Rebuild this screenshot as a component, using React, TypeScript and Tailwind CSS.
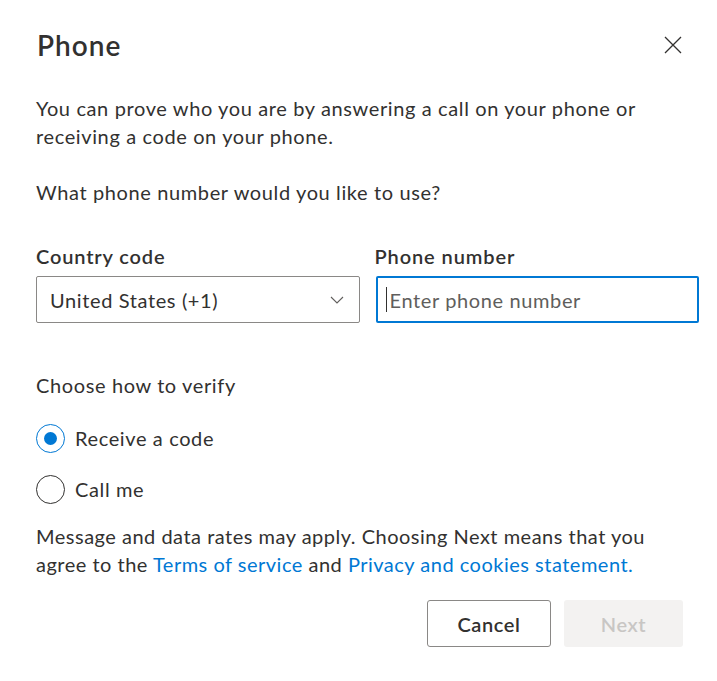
import React from "react";

const font = { fontFamily: "Lato, 'Open Sans', sans-serif" };

const Radio = ({ checked, label }: { checked: boolean; label: string }) => (
  <div className="flex h-[36px] items-center gap-[10px]">
    <div
      className={`flex h-[29px] w-[29px] items-center justify-center rounded-full border ${
        checked ? "border-[#0078d4]" : "border-[#323130]"
      }`}
    >
      {checked && <div className="h-[13px] w-[13px] rounded-full bg-[#0078d4]" />}
    </div>
    <span className="text-[20px] leading-[28px] text-[#323130]">{label}</span>
  </div>
);

export default function App() {
  return (
    <div
      className="flex h-[681px] w-[717px] flex-col bg-white pl-[36px] pr-[18px] tracking-[0.62px] text-[#323130]"
      style={font}
    >
      <div className="mt-[27px] flex h-[36px] items-center justify-between pr-[17px]">
        <h1 className="pl-[1px] text-[28px] font-semibold leading-[36px] tracking-[1px]">Phone</h1>
        <svg width="18" height="18" viewBox="0 0 18 18" className="text-[#323130]">
          <path d="M1 1 L17 17 M17 1 L1 17" stroke="currentColor" strokeWidth="1.3" fill="none" />
        </svg>
      </div>

      <p className="mt-[31px] pr-[40px] text-[20px] leading-[28px]">
        You can prove who you are by answering a call on your phone or receiving a code on your phone.
      </p>

      <p className="mt-[28px] text-[20px] leading-[28px]">What phone number would you like to use?</p>

      <div className="mt-[36px] grid grid-cols-2 gap-x-[16px]">
        <div className="flex flex-col gap-[6px]">
          <label className="text-[20px] font-semibold leading-[28px] tracking-[0.85px]">Country code</label>
          <div className="flex h-[47px] items-center justify-between rounded-[2px] border border-[#8a8886] pl-[13px] pr-[15px]">
            <span className="text-[20px] leading-[28px]">United States (+1)</span>
            <svg width="14" height="8" viewBox="0 0 14 8" className="text-[#605e5c]">
              <path d="M1 1 L7 7 L13 1" stroke="currentColor" strokeWidth="1.1" fill="none" />
            </svg>
          </div>
        </div>
        <div className="flex flex-col gap-[6px]">
          <label className="-ml-[1px] text-[20px] font-semibold leading-[28px] tracking-[0.9px]">Phone number</label>
          <div className="flex h-[47px] items-center rounded-[2px] border-2 border-[#0078d4] pl-[8px]">
            <div className="h-[25px] w-px bg-[#323130]" />
            <span className="ml-[3px] text-[20px] leading-[28px] text-[#605e5c]">Enter phone number</span>
          </div>
        </div>
      </div>

      <p className="mt-[48px] text-[20px] leading-[28px]">Choose how to verify</p>

      <div className="mt-[21px] flex flex-col gap-[15px]">
        <Radio checked label="Receive a code" />
        <Radio checked={false} label="Call me" />
      </div>

      <div className="mt-[15px] flex flex-col text-[20px] leading-[28px] tracking-[0.5px]">
        <p>Message and data rates may apply. Choosing Next means that you</p>
        <p>
          agree to the <a className="text-[#0078d4]">Terms of service</a> and{" "}
          <a className="text-[#0078d4]">Privacy and cookies statement.</a>
        </p>
      </div>

      <div className="mt-[22px] flex justify-end gap-[13px] pr-[16px]">
        <button className="h-[47px] w-[124px] rounded-[3px] border border-[#8a8886] bg-white text-[20px] font-semibold text-[#323130]">
          Cancel
        </button>
        <button className="h-[47px] w-[119px] rounded-[3px] bg-[#f3f2f1] text-[20px] font-semibold text-[#c8c6c4]">
          Next
        </button>
      </div>
    </div>
  );
}
